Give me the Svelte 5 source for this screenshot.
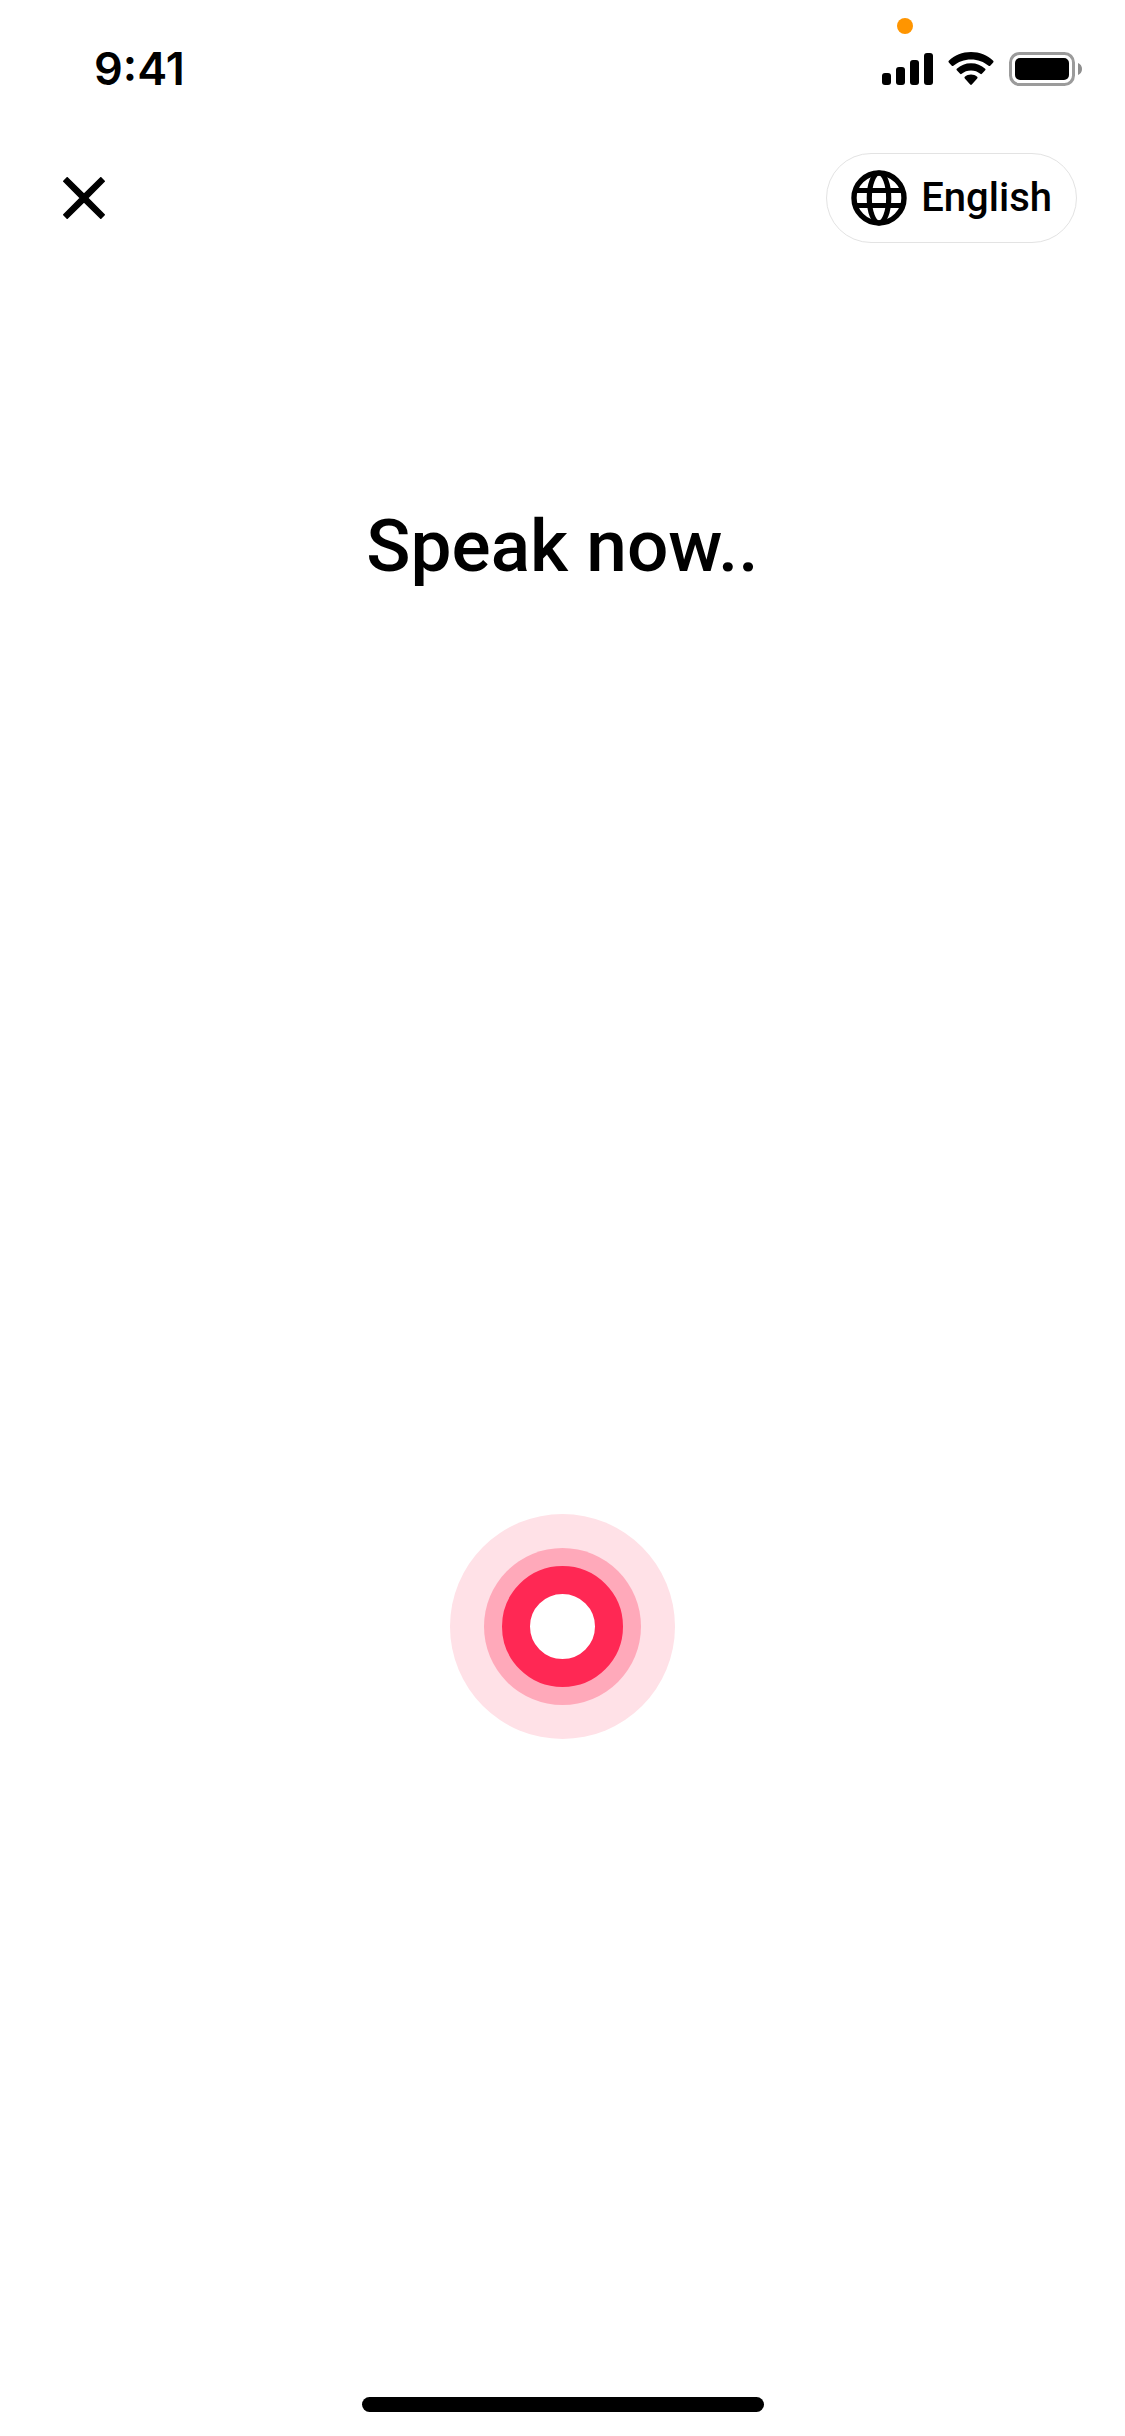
<script lang="ts">
  interface Props {
    time?: string;
    prompt?: string;
    language?: string;
  }

  let { time = '9:41', prompt = 'Speak now..', language = 'English' }: Props = $props();

  let listening = $state(true);

  function toggleListening() {
    listening = !listening;
  }

  function handleClose() {
    listening = false;
  }
</script>

<div class="screen">
  <div class="status-bar">
    <span class="time">{time}</span>
    <div class="status-icons">
      <span class="mic-indicator" aria-hidden="true"></span>
      <svg width="51" height="32" viewBox="0 0 51 32" aria-hidden="true">
        <rect x="0" y="20" width="9" height="12" rx="3" />
        <rect x="14" y="14" width="9" height="18" rx="3" />
        <rect x="28" y="7" width="9" height="25" rx="3" />
        <rect x="42" y="0" width="9" height="32" rx="3" />
      </svg>
      <svg width="46" height="34" viewBox="0 0 46 34" aria-hidden="true">
        <path d="M23 0C31.6 0 39.4 3.3 45.2 8.8Q46 9.6 45.2 10.4L42.2 13.7Q41.4 14.5 40.6 13.7C36 9.7 29.8 7.4 23 7.4S10 9.7 5.4 13.7Q4.6 14.5 3.8 13.7L0.8 10.4Q0 9.6 0.8 8.8C6.6 3.3 14.4 0 23 0Z" />
        <path d="M23 11.2C28.5 11.2 33.4 13.2 37.2 16.7Q38 17.5 37.2 18.3L33.9 21.8Q33.1 22.5 32.3 21.8C29.8 19.7 26.6 18.5 23 18.5S16.2 19.7 13.7 21.8Q12.9 22.5 12.1 21.8L8.8 18.3Q8 17.5 8.8 16.7C12.6 13.2 17.5 11.2 23 11.2Z" />
        <path d="M23 22.6C25.3 22.6 27.5 23.4 29.2 24.8Q30 25.6 29.2 26.4L23.8 32.6Q23 33.4 22.2 32.6L16.8 26.4Q16 25.6 16.8 24.8C18.5 23.4 20.7 22.6 23 22.6Z" />
      </svg>
      <svg width="73" height="34" viewBox="0 0 73 34" aria-hidden="true">
        <rect x="1.5" y="1.5" width="63" height="31" rx="9" fill="none" stroke="#9b9b9b" stroke-width="3" />
        <rect x="6" y="6" width="54" height="22" rx="5" />
        <path d="M69 11C71.5 12 73 14.2 73 17S71.5 22 69 23Z" fill="#8e8e8e" />
      </svg>
    </div>
  </div>

  <header class="toolbar">
    <button class="close" type="button" aria-label="Close" onclick={handleClose}>
      <svg width="42" height="42" viewBox="0 0 42 42" aria-hidden="true">
        <path
          d="M4.2 0.8L21 17.4L37.8 0.8L41.2 4.2L24.6 21L41.2 37.8L37.8 41.2L21 24.6L4.2 41.2L0.8 37.8L17.4 21L0.8 4.2Z"
          stroke="#000"
          stroke-width="1.6"
          stroke-linejoin="round"
        />
      </svg>
    </button>
    <button class="language" type="button">
      <svg width="56" height="56" viewBox="0 0 56 56" fill="none" stroke="#000" aria-hidden="true">
        <circle cx="28" cy="28" r="25" stroke-width="5.4" />
        <ellipse cx="28" cy="28" rx="9.7" ry="25" stroke-width="5.2" />
        <path d="M3 20.5H53M3 35.5H53" stroke-width="5.2" />
      </svg>
      <span>{language}</span>
    </button>
  </header>

  <main class="content">
    <h1 class="prompt">{prompt}</h1>
    <button
      class="record"
      type="button"
      aria-label="Voice input"
      aria-pressed={listening}
      onclick={toggleListening}
    >
      <span class="halo"><span class="ring"><span class="core"></span></span></span>
    </button>
  </main>

  <div class="home-indicator" aria-hidden="true"></div>
</div>

<style>
  :global(body) {
    background: #fff;
  }

  .screen {
    display: flex;
    flex-direction: column;
    align-items: stretch;
    box-sizing: border-box;
    min-height: 100vh;
    padding-bottom: 24px;
    background: #fff;
    color: #000;
    font-family: Roboto, 'Liberation Sans', sans-serif;
  }

  button {
    padding: 0;
    border: 0;
    background: none;
    color: inherit;
    font: inherit;
    cursor: pointer;
  }

  svg {
    display: block;
    flex-shrink: 0;
  }

  .status-bar {
    display: flex;
    align-items: center;
    justify-content: space-between;
    height: 138px;
    padding: 0 43px 0 94px;
  }

  .time {
    font-family: Inter, 'Liberation Sans', sans-serif;
    font-size: 45px;
    font-weight: 600;
    line-height: 48px;
  }

  .status-icons {
    position: relative;
    display: flex;
    align-items: center;
    gap: 15px;
  }

  /* orange dot shown while the microphone is in use */
  .mic-indicator {
    position: absolute;
    top: -34px;
    left: 15px;
    width: 16px;
    height: 16px;
    border-radius: 50%;
    background: #ff9500;
  }

  .toolbar {
    display: flex;
    align-items: center;
    justify-content: space-between;
    padding: 15px 48px 0 63px;
  }

  .language {
    display: flex;
    align-items: center;
    gap: 14px;
    height: 90px;
    padding: 0 24px;
    border: 1px solid #e3e3e3;
    border-radius: 45px;
    font-size: 40px;
    font-weight: 500;
    line-height: 48px;
  }

  .content {
    display: flex;
    flex: 1;
    flex-direction: column;
    align-items: center;
    padding-top: 257px;
  }

  .prompt {
    margin: 0;
    font-size: 73px;
    font-weight: 500;
    line-height: 92px;
  }

  .record {
    margin-top: 922px;
    border-radius: 50%;
  }

  .halo,
  .ring,
  .core {
    display: flex;
    align-items: center;
    justify-content: center;
    border-radius: 50%;
  }

  .halo {
    width: 225px;
    height: 225px;
    background: #ffe1e7;
  }

  .ring {
    width: 157px;
    height: 157px;
    background: #ffa9ba;
  }

  .core {
    box-sizing: border-box;
    width: 121px;
    height: 121px;
    border: 28px solid #ff2854;
    background: #fff;
  }

  .home-indicator {
    align-self: center;
    width: 402px;
    height: 15px;
    border-radius: 8px;
    background: #000;
  }
</style>
